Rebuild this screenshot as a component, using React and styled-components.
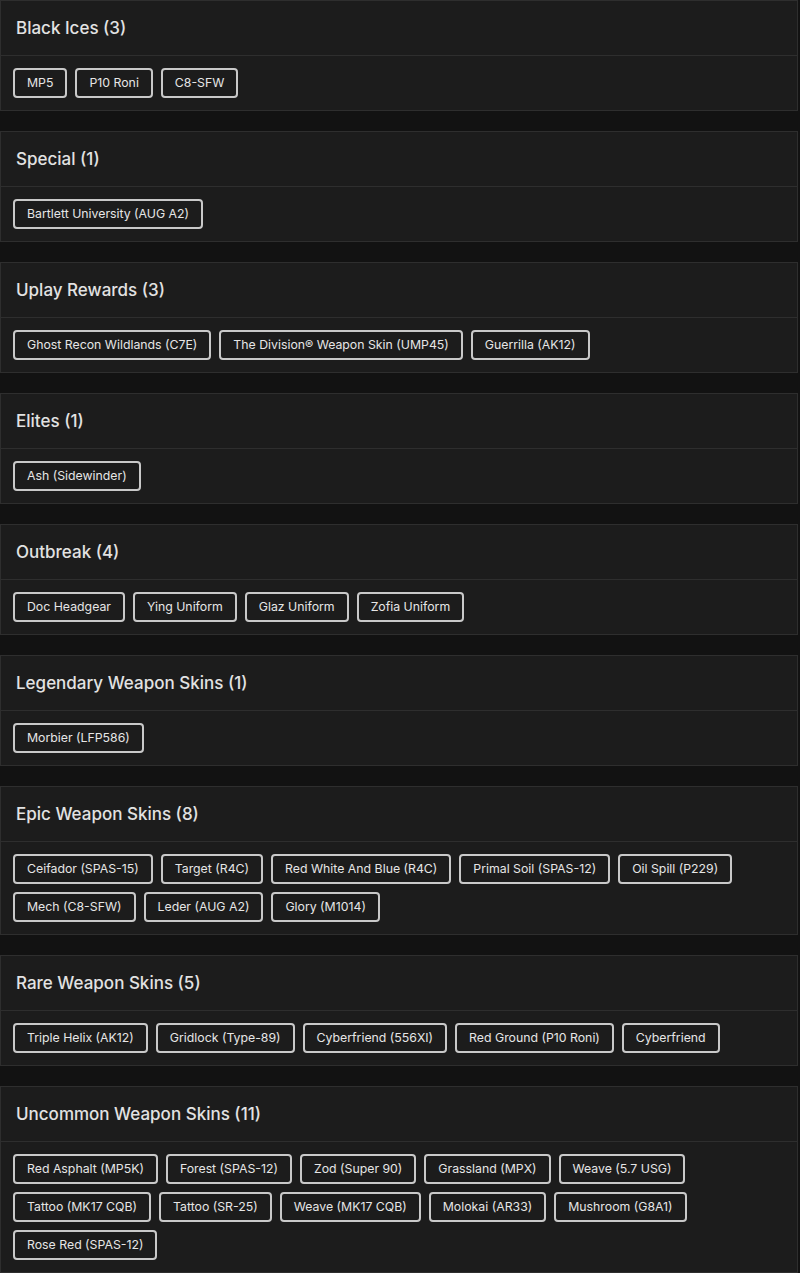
import React from 'react'
import styled, { createGlobalStyle } from 'styled-components'

const Global = createGlobalStyle`
  body {
    margin: 0;
    background: #121212;
    font-family: Inter, 'Noto Sans', sans-serif;
  }
`

const Page = styled.div`
  display: flex;
  flex-direction: column;
  gap: 20px;
  width: 798px;
`

const Card = styled.section`
  background: #1c1c1c;
  border: 1px solid #2e2e2e;
`

const Title = styled.h2`
  margin: 0;
  height: 54px;
  display: flex;
  align-items: center;
  padding: 0 15px;
  border-bottom: 1px solid #2e2e2e;
  font-size: 17px;
  font-weight: 500;
  color: #e2e2e2;
`

const Chips = styled.div`
  display: flex;
  flex-wrap: wrap;
  gap: 8px;
  padding: 12px;
`

const Chip = styled.span`
  display: inline-block;
  padding: 6px 12px;
  border: 2px solid #c9c9c9;
  border-radius: 4px;
  font-size: 12.3px;
  line-height: 14px;
  color: #e6e6e6;
  white-space: nowrap;
`

const groups = [
  ['Black Ices', ['MP5', 'P10 Roni', 'C8-SFW']],
  ['Special', ['Bartlett University (AUG A2)']],
  ['Uplay Rewards', ['Ghost Recon Wildlands (C7E)', 'The Division® Weapon Skin (UMP45)', 'Guerrilla (AK12)']],
  ['Elites', ['Ash (Sidewinder)']],
  ['Outbreak', ['Doc Headgear', 'Ying Uniform', 'Glaz Uniform', 'Zofia Uniform']],
  ['Legendary Weapon Skins', ['Morbier (LFP586)']],
  ['Epic Weapon Skins', ['Ceifador (SPAS-15)', 'Target (R4C)', 'Red White And Blue (R4C)', 'Primal Soil (SPAS-12)', 'Oil Spill (P229)', 'Mech (C8-SFW)', 'Leder (AUG A2)', 'Glory (M1014)']],
  ['Rare Weapon Skins', ['Triple Helix (AK12)', 'Gridlock (Type-89)', 'Cyberfriend (556XI)', 'Red Ground (P10 Roni)', 'Cyberfriend']],
  ['Uncommon Weapon Skins', ['Red Asphalt (MP5K)', 'Forest (SPAS-12)', 'Zod (Super 90)', 'Grassland (MPX)', 'Weave (5.7 USG)', 'Tattoo (MK17 CQB)', 'Tattoo (SR-25)', 'Weave (MK17 CQB)', 'Molokai (AR33)', 'Mushroom (G8A1)', 'Rose Red (SPAS-12)']],
]

export default function App() {
  return (
    <>
      <Global />
      <Page>
        {groups.map(([name, items]) => (
          <Card key={name}>
            <Title>{name} ({items.length})</Title>
            <Chips>
              {items.map((it, i) => <Chip key={i}>{it}</Chip>)}
            </Chips>
          </Card>
        ))}
      </Page>
    </>
  )
}
